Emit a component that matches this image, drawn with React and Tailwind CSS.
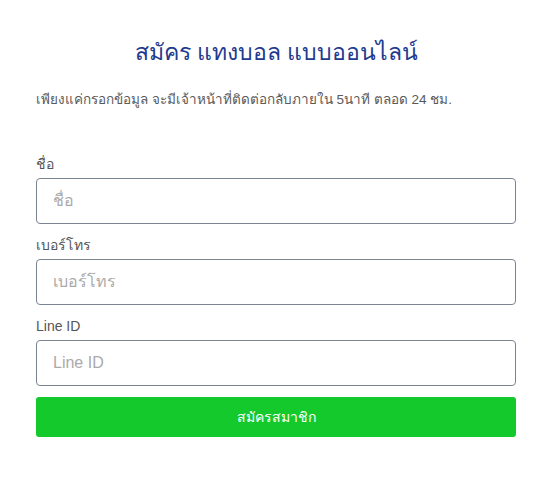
export default function App() {
  const fields = [
    { label: "ชื่อ", ph: "ชื่อ" },
    { label: "เบอร์โทร", ph: "เบอร์โทร" },
    { label: "Line ID", ph: "Line ID" },
  ];
  return (
    <div className="w-[553px] h-[481px] bg-white px-[36px] pt-[35px]" style={{ fontFamily: '"Liberation Sans", Roboto, sans-serif' }}>
      <h1 className="text-center text-[23px] leading-[34px] text-[#1f3b8f] font-normal">สมัคร แทงบอล แบบออนไลน์</h1>
      <p className="mt-[21px] text-[13.5px] leading-[20px] text-[#5a5a5a]">เพียงแค่กรอกข้อมูล จะมีเจ้าหน้าที่ติดต่อกลับภายใน 5นาที ตลอด 24 ชม.</p>
      <form className="mt-[44px] flex flex-col gap-[11px]">
        {fields.map((f, i) => (
          <div key={i} className="flex flex-col">
            <label className="text-[14px] leading-[20px] text-[#555] mb-[4px]">{f.label}</label>
            <input
              placeholder={f.ph}
              className="h-[46px] w-[480px] border border-[#7b8591] rounded-[4px] px-[16px] text-[16px] placeholder:text-[#aaa] outline-none"
            />
          </div>
        ))}
        <button type="button" className="h-[40px] w-[480px] rounded-[3px] bg-[#13c92c] text-white text-[14px]">สมัครสมาชิก</button>
      </form>
    </div>
  );
}
